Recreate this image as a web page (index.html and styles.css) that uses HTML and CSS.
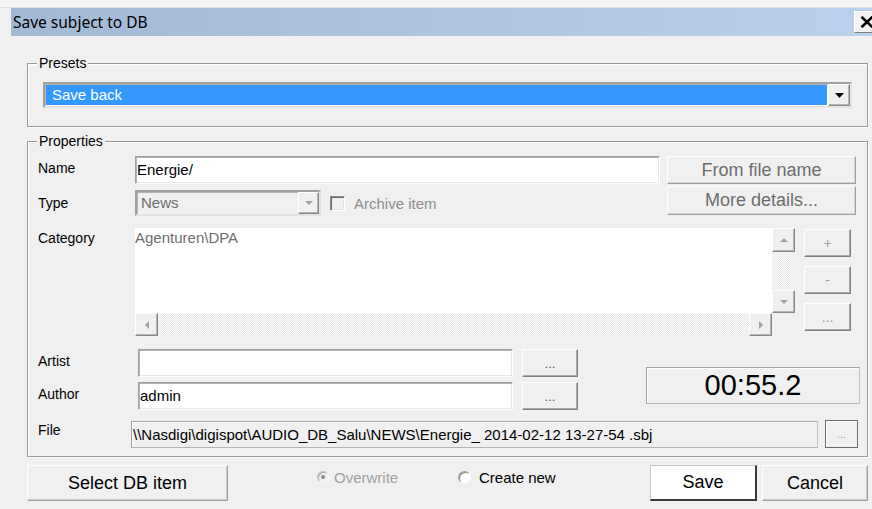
FILE: index.html
```html
<!DOCTYPE html>
<html lang="en">
<head>
<meta charset="utf-8">
<title>Save subject to DB</title>
<link rel="stylesheet" href="styles.css">
</head>
<body>
<div class="dialog">
  <div class="frame-top"></div>
  <header class="titlebar">
    <span class="title">Save subject to DB</span>
    <button class="close-btn" type="button" aria-label="Close">
      <svg width="14" height="12" viewBox="0 0 14 12"><path d="M1.5 0.8 L12.5 11.2 M12.5 0.8 L1.5 11.2" stroke="#000" stroke-width="2.6" fill="none"/></svg>
    </button>
  </header>

  <main class="client">
    <fieldset class="group">
      <legend>Presets</legend>
      <div class="group-body presets-body">
        <div class="combo combo-presets">
          <div class="combo-text is-selected">Save back</div>
          <div class="combo-drop raised">
            <svg width="9" height="5" viewBox="0 0 9 5"><path d="M0 0 H9 L4.5 5 Z" fill="#000"/></svg>
          </div>
        </div>
      </div>
    </fieldset>

    <fieldset class="group group-props">
      <legend>Properties</legend>
      <div class="group-body props-body">
        <div class="row row-name">
          <span class="lbl">Name</span>
          <div class="edit edit-name">Energie/</div>
          <button class="btn btn-wide" type="button">From file name</button>
        </div>

        <div class="row row-type">
          <span class="lbl lbl-type">Type</span>
          <div class="combo combo-type">
            <div class="combo-text">News</div>
            <div class="combo-drop raised">
              <svg width="8" height="4" viewBox="0 0 8 4"><path d="M0 0 H8 L4 4 Z" fill="#a0a0a0"/></svg>
            </div>
          </div>
          <span class="check"></span>
          <span class="check-label">Archive item</span>
          <button class="btn btn-wide btn-details" type="button">More details...</button>
        </div>

        <div class="row row-category">
          <span class="lbl lbl-top">Category</span>
          <div class="listbox">
            <div class="list-items">Agenturen\DPA</div>
            <div class="vscroll">
              <div class="sb-btn sb-up raised">
                <svg width="8" height="4" viewBox="0 0 8 4"><path d="M0 4 H8 L4 0 Z" fill="#a0a0a0"/></svg>
              </div>
              <div class="sb-track"></div>
              <div class="sb-btn sb-down raised">
                <svg width="8" height="4" viewBox="0 0 8 4"><path d="M0 0 H8 L4 4 Z" fill="#a0a0a0"/></svg>
              </div>
            </div>
            <div class="hscroll">
              <div class="sb-btn raised">
                <svg width="4" height="8" viewBox="0 0 4 8"><path d="M4 0 V8 L0 4 Z" fill="#a0a0a0"/></svg>
              </div>
              <div class="sb-track"></div>
              <div class="sb-btn raised">
                <svg width="4" height="8" viewBox="0 0 4 8"><path d="M0 0 V8 L4 4 Z" fill="#a0a0a0"/></svg>
              </div>
            </div>
            <div class="sb-corner"></div>
          </div>
          <div class="list-tools">
            <button class="btn btn-tool" type="button">+</button>
            <button class="btn btn-tool" type="button">-</button>
            <button class="btn btn-tool" type="button">...</button>
          </div>
        </div>

        <div class="row row-people">
          <div class="people-fields">
            <div class="row row-person">
              <span class="lbl lbl-person">Artist</span>
              <div class="edit edit-person"></div>
              <button class="btn btn-browse" type="button">...</button>
            </div>
            <div class="row row-person">
              <span class="lbl lbl-person">Author</span>
              <div class="edit edit-person">admin</div>
              <button class="btn btn-browse" type="button">...</button>
            </div>
          </div>
          <div class="duration">00:55.2</div>
        </div>

        <div class="row row-file">
          <span class="lbl lbl-file">File</span>
          <div class="file-path">\\Nasdigi\digispot\AUDIO_DB_Salu\NEWS\Energie_ 2014-02-12 13-27-54 .sbj</div>
          <button class="btn btn-file" type="button">...</button>
        </div>
      </div>
    </fieldset>

    <div class="actions">
      <button class="btn btn-action" type="button">Select DB item</button>
      <label class="radio-opt radio-overwrite"><span class="radio is-checked is-disabled"></span>Overwrite</label>
      <label class="radio-opt radio-new"><span class="radio"></span>Create new</label>
      <button class="btn btn-save" type="button">Save</button>
      <button class="btn btn-action btn-cancel" type="button">Cancel</button>
    </div>
  </main>
</div>
</body>
</html>
```

FILE: styles.css
```css
* { box-sizing: border-box; }

html, body {
  margin: 0;
  padding: 0;
}

body {
  width: 872px;
  height: 509px;
  overflow: hidden;
  background: #f0f0f0;
  font-family: "Liberation Sans", Arial, sans-serif;
  font-size: 15px;
  color: #000;
}

.dialog {
  width: 872px;
  height: 509px;
  overflow: hidden;
}

/* window frame and caption */
.frame-top {
  height: 8px;
  background: #f6f6f6;
  border-bottom: 1px solid #e2e2e2;
}

.titlebar {
  height: 28px;
  margin-left: 11px;
  background: linear-gradient(to right, #a2b9d6, #b9d1ea);
  display: flex;
  align-items: center;
  justify-content: space-between;
}

.title {
  font-family: "Noto Sans", "Liberation Sans", sans-serif;
  font-size: 15.5px;
  padding-left: 2px;
  color: #000;
}

.close-btn {
  width: 26px;
  height: 22px;
  margin-right: -8px;
  flex-shrink: 0;
  padding: 0 0 0 5px;
  background: #f2f2f2;
  border: 1px solid;
  border-color: #fff #7a7a7a #7a7a7a #fff;
  display: flex;
  align-items: center;
  justify-content: flex-start;
}

/* client area */
.client {
  padding: 19px 0 0 27px;
}

.group {
  margin: 0;
  padding: 0;
  min-width: 0;
  width: 841px;
  border: 1px solid #999;
  box-shadow: inset 1px 1px #fff, 1px 1px #fff;
}

.group legend {
  margin-left: 9px;
  padding: 0 2px;
  font-size: 14px;
  line-height: 16px;
  background: #f0f0f0;
}

.group-props {
  margin-top: 6px;
}

.presets-body {
  padding: 11px 15px 18px 15px;
}

.props-body {
  padding: 7px 11px 8px 10px;
}

/* shared 3D edges */
.raised {
  background: #f0f0f0;
  border: 1px solid;
  border-color: #fff #888 #888 #fff;
  box-shadow: inset -1px -1px #b4b4b4;
  display: flex;
  align-items: center;
  justify-content: center;
}

/* combo boxes */
.combo {
  display: flex;
  border: 2px solid;
  border-color: #a0a0a0 #e3e3e3 #e3e3e3 #a0a0a0;
  box-shadow: inset 1px 1px #b4b4b4;
}

.combo-presets {
  width: 809px;
  height: 26px;
  background: #fff;
}

.combo-text {
  flex: 1;
  white-space: nowrap;
  font-size: 15px;
}

.combo-text.is-selected {
  margin: 1px;
  background: #3399ff;
  color: #fff;
  padding-left: 6px;
  line-height: 20px;
}

.combo-drop {
  width: 22px;
  flex-shrink: 0;
}

.combo-type {
  width: 186px;
  height: 26px;
  background: #f0f0f0;
  align-self: flex-end;
  flex-shrink: 0;
}

.combo-type .combo-text {
  color: #6d6d6d;
  padding-left: 4px;
  line-height: 22px;
}

.combo-type .combo-drop {
  width: 21px;
}

/* rows */
.row {
  display: flex;
  align-items: center;
}

.lbl {
  width: 97px;
  flex-shrink: 0;
  font-size: 14px;
  line-height: 16px;
  padding-bottom: 4px;
}

.row-name {
  height: 28px;
}

.edit {
  height: 28px;
  background: #fff;
  border: 1px solid;
  border-color: #a0a0a0 #fff #fff #a0a0a0;
  box-shadow: inset 1px 1px #b4b4b4, inset -1px -1px #e8e8e8;
  padding-left: 1px;
  font-size: 15px;
  line-height: 26px;
  white-space: nowrap;
  flex-shrink: 0;
}

.edit-name {
  width: 525px;
}

/* buttons */
.btn {
  font-family: "Liberation Sans", Arial, sans-serif;
  margin: 0;
  padding: 0;
  background: #f0f0f0;
  color: #000;
  border: 1px solid;
  border-color: #fff #a0a0a0 #a0a0a0 #fff;
  flex-shrink: 0;
}

.btn-wide {
  width: 189px;
  height: 28px;
  margin-left: 7px;
  font-size: 18px;
  color: #6d6d6d;
  box-shadow: inset -1px -1px #d4d4d4;
}

.row-type {
  margin-top: 2px;
  height: 30px;
}

.lbl-type {
  padding-bottom: 0;
  padding-top: 4px;
}

.btn-details {
  margin-left: auto;
  align-self: flex-start;
  height: 29px;
}

.check {
  width: 15px;
  height: 15px;
  margin: 5px 0 0 9px;
  flex-shrink: 0;
  background: #f0f0f0;
  border: 1px solid;
  border-color: #8c8c8c #fff #fff #8c8c8c;
  box-shadow: inset 1px 1px #6a6a6a, inset -1px -1px #e3e3e3;
}

.check-label {
  margin: 4px 0 0 9px;
  color: #8d8d8d;
  font-size: 15px;
  white-space: nowrap;
}

/* category list */
.row-category {
  margin-top: 12px;
  height: 108px;
  align-items: flex-start;
}

.lbl-top {
  padding-top: 2px;
}

.listbox {
  width: 660px;
  height: 108px;
  flex-shrink: 0;
  display: grid;
  grid-template-columns: 637px 23px;
  grid-template-rows: 85px 23px;
}

.list-items {
  background: #fff;
  color: #6d6d6d;
  font-size: 15px;
  line-height: 18px;
  padding-top: 1px;
}

.vscroll {
  display: flex;
  flex-direction: column;
}

.sb-up { height: 24px; }
.sb-down { height: 23px; }

.sb-track {
  flex: 1;
  background: repeating-conic-gradient(#fdfdfd 0% 25%, #e6e6e6 0% 50%) 0 0 / 2px 2px;
}

.hscroll {
  display: flex;
}

.hscroll .sb-btn {
  width: 23px;
}

.sb-corner {
  background: #f0f0f0;
}

.list-tools {
  display: flex;
  flex-direction: column;
  gap: 9px;
  margin-left: 9px;
  padding-top: 1px;
}

.btn-tool {
  width: 47px;
  height: 28px;
  font-size: 14px;
  color: #a0a0a0;
  border-color: #fff #808080 #808080 #fff;
  box-shadow: inset -1px -1px #a8a8a8;
}

/* artist / author */
.row-people {
  margin-top: 13px;
  align-items: flex-start;
}

.people-fields {
  display: flex;
  flex-direction: column;
  gap: 5px;
  flex-shrink: 0;
}

.row-person {
  height: 28px;
}

.lbl-person {
  width: 100px;
}

.edit-person {
  width: 375px;
}

.btn-browse {
  width: 56px;
  height: 28px;
  margin-left: 9px;
  font-size: 13px;
  color: #555;
  border-color: #fff #808080 #808080 #fff;
  box-shadow: inset -1px -1px #a8a8a8;
}

.duration {
  width: 214px;
  height: 37px;
  margin: 18px 0 0 68px;
  flex-shrink: 0;
  border: 1px solid;
  border-color: #a0a0a0 #c4c4c4 #b4b4b4 #a0a0a0;
  box-shadow: inset 1px 1px #fff;
  font-size: 29px;
  line-height: 35px;
  text-align: center;
}

/* file path */
.row-file {
  margin-top: 10px;
  height: 28px;
}

.lbl-file {
  width: 93px;
  padding-bottom: 8px;
}

.file-path {
  width: 687px;
  height: 27px;
  flex-shrink: 0;
  border: 1px solid;
  border-color: #a0a0a0 #c4c4c4 #b4b4b4 #a0a0a0;
  box-shadow: inset 1px 1px #fff;
  padding-left: 1px;
  font-size: 15px;
  line-height: 25px;
  white-space: nowrap;
  overflow: hidden;
}

.btn-file {
  width: 33px;
  height: 28px;
  margin-left: 7px;
  border: 1px solid #6a6a6a;
  box-shadow: inset 1px 1px #fff;
  font-size: 11px;
  color: #a0a0a0;
}

/* bottom command row */
.actions {
  margin-top: 8px;
  width: 841px;
  height: 36px;
  display: flex;
}

.btn-action {
  width: 201px;
  height: 36px;
  font-size: 18px;
  box-shadow: inset -1px -1px #c8c8c8;
}

.radio-opt {
  display: flex;
  align-items: center;
  align-self: flex-start;
  margin-top: 3px;
  height: 18px;
  font-size: 15px;
  white-space: nowrap;
  flex-shrink: 0;
}

.radio-overwrite {
  width: 141px;
  margin-left: 89px;
  color: #a0a0a0;
}

.radio {
  width: 13px;
  height: 13px;
  margin-right: 8px;
  border-radius: 50%;
  border: 1px solid;
  border-color: #a0a0a0 #f8f8f8 #f8f8f8 #a0a0a0;
  background: #fff;
  box-shadow: inset 1px 1px #8a8a8a;
  display: grid;
  place-items: center;
  flex-shrink: 0;
}

.radio.is-disabled {
  width: 12px;
  height: 12px;
  margin-right: 5px;
  background: #f0f0f0;
  border-color: #c0c0c0 #f8f8f8 #f8f8f8 #c0c0c0;
  box-shadow: inset 1px 1px #b0b0b0;
}

.radio.is-checked::after {
  content: "";
  width: 4px;
  height: 4px;
  border-radius: 50%;
  background: #8a8a8a;
}

.btn-save {
  width: 107px;
  height: 36px;
  margin-left: auto;
  background: #fff;
  border-width: 1px 2px 2px 1px;
  border-color: #c8c8c8 #3a3a3a #3a3a3a #c8c8c8;
  font-size: 18px;
}

.btn-cancel {
  width: 106px;
  margin-left: 5px;
}
```
